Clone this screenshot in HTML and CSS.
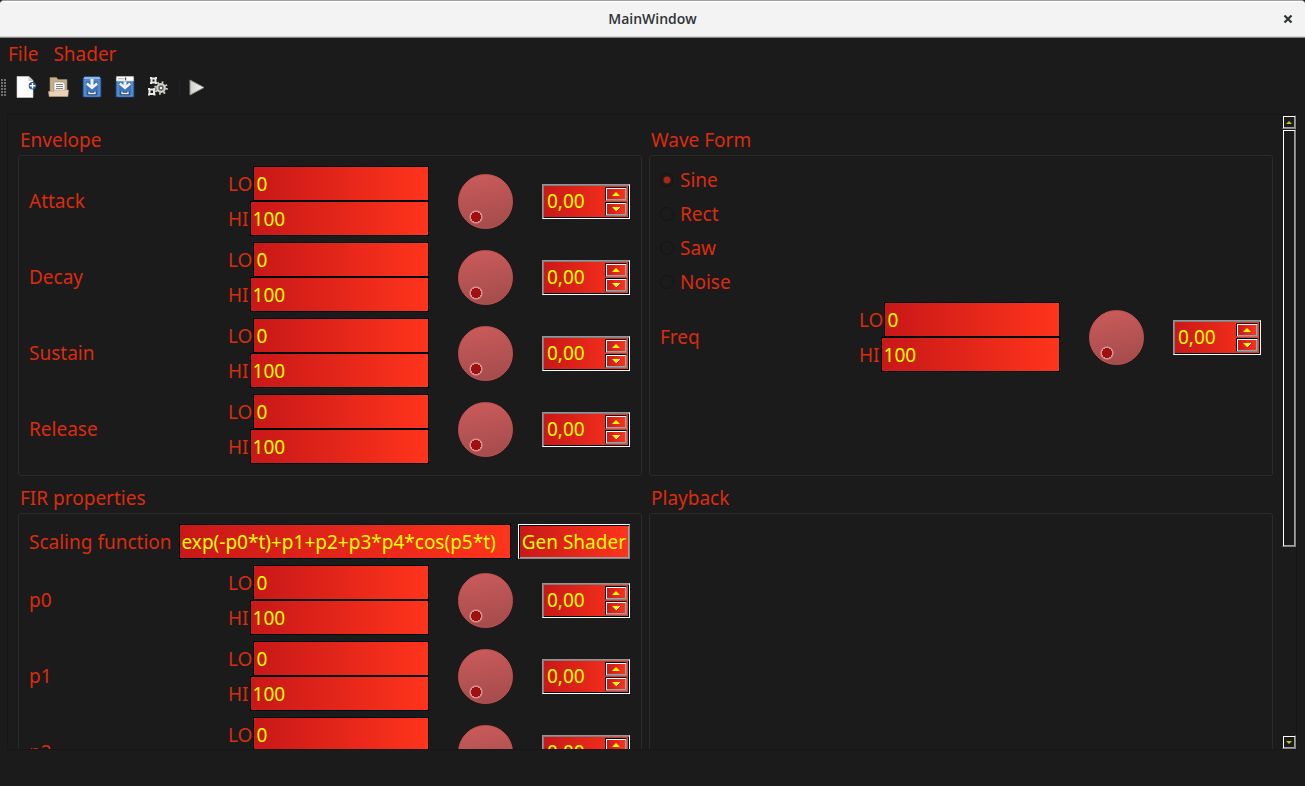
FILE: index.html
```
<!DOCTYPE html>
<html lang="en">
<head>
<meta charset="utf-8">
<title>MainWindow</title>
<link rel="stylesheet" href="styles.css">
</head>
<body>
<div class="window">
  <header class="titlebar">
    <h1 class="titlebar-text">MainWindow</h1>
    <button class="close" aria-label="Close"><svg width="10" height="10" viewBox="0 0 10 10"><path d="M1.500 1.500l7 7M8.500 1.500l-7 7" stroke="#2e3436" stroke-width="2.200"/></svg></button>
  </header>
  <nav class="menubar">
    <button class="menu">File</button>
    <button class="menu">Shader</button>
  </nav>
  <div class="toolbar" role="toolbar" aria-label="Main toolbar">
    <span class="grip"></span>
    <button class="tool" aria-label="New"><svg viewBox="0 0 24 24"><path d="M3 1.500h12l4 4V22.500H3z" fill="#fdfdfd" stroke="#d8d8d8" stroke-width=".6"/><path d="M14.500 1.500v4.500H19z" fill="#c9ccc8"/><circle cx="18.500" cy="10.800" r="3.800" fill="#1f569c"/><path d="M18.500 8v5.600M15.700 10.800h5.600" stroke="#fff" stroke-width="1.500"/></svg></button>
    <button class="tool" aria-label="Open"><svg viewBox="0 0 24 24"><path d="M3 2.500h6.500l1.500 2h9V20H3z" fill="#c6b089" stroke="#9d8862" stroke-width=".6"/><path d="M7 7h9l2 2v8H7z" fill="#f8f8f6" stroke="#8b8b85" stroke-width=".6"/><path d="M9 9.500h7M9 11.500h7M9 13.500h7" stroke="#777" stroke-width=".9"/><path d="M1.500 16.500h5l2-1.500H21.500l-.6 6.500H2.200z" fill="#e9d2b5" stroke="#bca47f" stroke-width=".6"/></svg></button>
    <button class="tool" aria-label="Save"><svg viewBox="0 0 24 24"><path d="M4.500 1.500h15l1.500 2.500v18H3V4z" fill="#3c74bd" stroke="#1d4a8c" stroke-width=".7"/><path d="M4.500 2h15L20.500 4h-17z" fill="#8eb6e6"/><path d="M5 5v16h14V5z" fill="none" stroke="#7ba4dc" stroke-width=".8"/><path d="M12 4v7" stroke="#f4f4f4" stroke-width="3"/><path d="M6.800 8.500L12 13l5.200-4.500" fill="none" stroke="#f4f4f4" stroke-width="2.400"/><path d="M9 16.200v2.600h6v-2.600" fill="none" stroke="#1c3864" stroke-width="3"/><path d="M9 16.500v2h6v-2" fill="none" stroke="#f1f1ec" stroke-width="1.400"/></svg></button>
    <button class="tool" aria-label="Save as"><svg viewBox="0 0 24 24"><path d="M3 3h18v19H3z" fill="#3c74bd" stroke="#1d4a8c" stroke-width=".7"/><path d="M5 6v15h14V6z" fill="none" stroke="#7ba4dc" stroke-width=".8"/><path d="M3.500 1.500h17v4.500h-17z" fill="#fff" stroke="#ccc" stroke-width=".6"/><path d="M5 3.800h6.500" stroke="#aaa"/><path d="M12.700 2.500v2.800" stroke="#222"/><path d="M12 6.500v5" stroke="#f4f4f4" stroke-width="3"/><path d="M6.800 8.500L12 13l5.200-4.500" fill="none" stroke="#f4f4f4" stroke-width="2.400"/><path d="M9 16.200v2.600h6v-2.600" fill="none" stroke="#1c3864" stroke-width="3"/><path d="M9 16.500v2h6v-2" fill="none" stroke="#f1f1ec" stroke-width="1.400"/></svg></button>
    <button class="tool" aria-label="Settings"><svg viewBox="0 0 24 24"><g fill="none" stroke="#e8e8e4" stroke-width="2"><path d="M5.500 3.500h4v4h-4z"/><path d="M3.500 14.500h4.500v4.500H3.500z"/></g><g fill="#e8e8e4"><path d="M4 2h2v2H4zM9 2h2v2H9zM4 7h2v2H4zM9 7h2v2H9zM2 13h2v2H2zM7.500 13h2v2h-2zM2 18.500h2v2H2zM7.500 18.500h2v2h-2z"/></g><circle cx="15" cy="13" r="5.700" fill="none" stroke="#cfcfcb" stroke-width="2.200" stroke-dasharray="1.700 2.777"/><circle cx="15" cy="13" r="3.800" fill="#555753" stroke="#cfcfcb" stroke-width="2.200"/><circle cx="15" cy="13" r="1.300" fill="#eee"/></svg></button>
    <span class="tool-separator"></span>
    <button class="tool" aria-label="Run"><svg viewBox="0 0 24 24"><defs><linearGradient id="play" x1="0" x2="1"><stop stop-color="#cfcfcb"/><stop offset="1" stop-color="#fafafa"/></linearGradient></defs><path d="M5 5l14 7.500L5 20z" fill="url(#play)" stroke="#8c8e89" stroke-width="1"/></svg></button>
  </div>

  <main class="scroll-area">
    <div class="viewport">
      <div class="groups">
        <section class="group"><h2 class="group-title">Envelope</h2><div class="frame" id="envelope"></div></section>
        <section class="group"><h2 class="group-title">Wave Form</h2>
          <div class="frame" id="wave">
            <label class="radio"><input type="radio" name="wave" checked>Sine</label>
            <label class="radio"><input type="radio" name="wave">Rect</label>
            <label class="radio"><input type="radio" name="wave">Saw</label>
            <label class="radio"><input type="radio" name="wave">Noise</label>
          </div>
        </section>
        <section class="group"><h2 class="group-title">FIR properties</h2>
          <div class="frame" id="fir">
            <div class="scaling">
              <label for="scaling">Scaling function</label>
              <input class="field" id="scaling" type="text" value="exp(-p0*t)+p1+p2+p3*p4*cos(p5*t)">
              <button class="generate">Gen Shader</button>
            </div>
          </div>
        </section>
        <section class="group"><h2 class="group-title">Playback</h2><div class="frame"></div></section>
      </div>
    </div>
    <div class="scrollbar">
      <button class="scroll-button" aria-label="Scroll up"><svg width="6" height="3" viewBox="0 0 6 3"><path d="M0 3L3 0l3 3z" fill="#c8c800"/></svg></button>
      <div class="track"><div class="thumb"></div></div>
      <button class="scroll-button" aria-label="Scroll down"><svg width="6" height="3" viewBox="0 0 6 3"><path d="M0 0h6L3 3z" fill="#c8c800"/></svg></button>
    </div>
  </main>
  <footer class="statusbar"></footer>
</div>

<template id="parameter">
  <div class="parameter">
    <span class="parameter-name"></span>
    <div class="limits">
      <label class="limit">LO<input class="field" type="text" value="0"></label>
      <label class="limit">HI<input class="field" type="text" value="100"></label>
    </div>
    <input class="dial" type="range" min="0" max="100" value="0">
    <div class="spin">
      <input class="spin-value" type="text" inputmode="decimal" value="0,00">
      <div class="spin-buttons">
        <button class="spin-button" aria-label="Increase"><svg width="8" height="4" viewBox="0 0 8 4"><path d="M0 4l4-4 4 4z" fill="#ff0"/></svg></button>
        <button class="spin-button" aria-label="Decrease"><svg width="8" height="4" viewBox="0 0 8 4"><path d="M0 0h8L4 4z" fill="#ff0"/><path d="M8 0L4 4" stroke="#fff"/></svg></button>
      </div>
    </div>
  </div>
</template>
<script src="app.js"></script>
</body>
</html>
```
FILE: styles.css
```
* { box-sizing: border-box; }
body {
  margin: 0;
  background: #1b1b1b;
  color: #dc2c10;
  font: 19px/28px "Noto Sans", sans-serif;
}
button, input { font: inherit; color: inherit; margin: 0; padding: 0; border: 0; background: none; border-radius: 0; }
svg { display: block; }

.window { display: flex; flex-direction: column; height: 100vh; }

.titlebar {
  display: grid;
  grid-template-columns: 34px 1fr 34px;
  align-items: center;
  height: 38px;
  flex: none;
  background: #f3f3f3;
  border-top: 1px solid #a39fa0;
  border-bottom: 1px solid #858585;
  border-radius: 4px 4px 0 0;
  box-shadow: inset 0 1px #fff, inset 0 -1px #d4d4d4;
}
.titlebar-text {
  grid-column: 2;
  margin: 0;
  text-align: center;
  color: #2e3436;
  font: 600 14px/20px "Open Sans", sans-serif;
}
.close { display: grid; place-items: center; height: 34px; }

.menubar { display: flex; gap: 15px; padding: 2px 8px 0; flex: none; }
.menu { height: 28px; }

.toolbar { display: flex; align-items: center; height: 38px; padding-left: 1px; flex: none; }
.grip {
  width: 6px;
  height: 18px;
  margin-right: 7px;
  background: repeating-linear-gradient(#1b1b1b 0 1px, transparent 1px 3px), repeating-linear-gradient(90deg, #707070 0 2px, #1b1b1b 2px 3px);
}
.tool { width: 24px; height: 24px; margin-right: 9px; }
.tool svg { width: 24px; height: 24px; }
.tool-separator { width: 1px; height: 18px; margin-right: 5px; background: #202020; }

.scroll-area {
  display: flex;
  flex: 1;
  min-height: 0;
  margin: 8px 8px 0 7px;
  border: 1px solid #161616;
}
.viewport { flex: 1; overflow: hidden; }
.groups { display: grid; grid-template-columns: 1fr 1fr; gap: 8px 7px; padding: 11px 9px 11px 10px; }
.group { display: flex; flex-direction: column; min-width: 0; }
.group-title { margin: 0; padding: 0 2px 1px; font-size: 19px; font-weight: 400; line-height: 28px; }
.frame {
  display: flex;
  flex-direction: column;
  flex: 1;
  gap: 6px;
  padding: 10px 11px 11px 10px;
  border: 1px solid #2b2b2b;
  border-radius: 3px;
}

.parameter { display: grid; grid-template-columns: minmax(0, 1fr) 201px 55px 88px; column-gap: 29px; align-items: center; }
.limits { display: grid; grid-template-columns: minmax(0, 1fr); }
.limit { display: flex; align-items: center; gap: 1px; }
.field {
  flex: 1;
  min-width: 0;
  height: 35px;
  padding: 0 2px;
  border: 1px solid #000;
  background: linear-gradient(90deg, #c81818, #ff341c);
  color: #ff0;
}

.dial {
  appearance: none;
  width: 55px;
  height: 55px;
  border: 1px solid #c85050;
  border-radius: 50%;
  background:
    radial-gradient(circle at 17px 42px, #a01010 0 5px, #d89090 5px 6px, transparent 7px),
    linear-gradient(170deg, #cb5b5b, #a24b4b);
}
.dial::-webkit-slider-thumb { appearance: none; width: 1px; height: 1px; }

.spin {
  display: flex;
  height: 35px;
  padding: 1px 2px 2px 3px;
  border: 1px solid;
  border-color: #959595 #fff #fff #959595;
  background: linear-gradient(90deg, #c81818, #ff341c);
  box-shadow: inset 1px 1px #808080, inset -1px -1px #000;
}
.spin-value { flex: 1; min-width: 0; padding-left: 1px; color: #ff0; }
.spin-buttons { display: grid; gap: 1px; width: 22px; padding-top: 1px; align-content: start; }
.spin-button {
  display: grid;
  place-items: center;
  height: 14px;
  border: 1px solid;
  border-color: #000 #858585 #858585 #000;
  background: linear-gradient(90deg, #c81818, #ff341c);
  box-shadow: inset 1px 1px #fff, inset -1px -1px #a0a0a0;
}

.scaling { display: flex; align-items: center; gap: 7px; }
.generate {
  height: 35px;
  padding: 0 3px;
  border: 1px solid;
  border-color: #fff #858585 #858585 #fff;
  background: linear-gradient(90deg, #c81818, #ff341c);
  box-shadow: inset 1px 1px #000, inset -1px -1px #a0a0a0;
  color: #ff0;
}

.radio { display: flex; align-items: center; gap: 6px; }
.radio input {
  appearance: none;
  width: 14px;
  height: 14px;
  border: 1px solid #141414;
  border-radius: 50%;
}
.radio input:checked { background: radial-gradient(circle, #a82812 0 3px, transparent 4px); }

.scrollbar { display: flex; flex-direction: column; width: 14px; }
.scroll-button, .thumb {
  border: 1px solid;
  border-color: #1b1b1b #858585 #858585 #1b1b1b;
  box-shadow: inset 1px 1px #fff, inset -1px -1px #a0a0a0;
}
.scroll-button { display: grid; place-items: center; height: 14px; flex: none; }
.track { flex: 1; }
.thumb { height: 69%; }

.statusbar { height: 36px; flex: none; }
```
FILE: app.js
```
const template = document.getElementById("parameter");
const parameters = {
  envelope: ["Attack", "Decay", "Sustain", "Release"],
  wave: ["Freq"],
  fir: ["p0", "p1", "p2", "p3", "p4", "p5"],
};

for (const [group, names] of Object.entries(parameters)) {
  for (const name of names) {
    const row = template.content.cloneNode(true);
    row.querySelector(".parameter-name").textContent = name;
    row.querySelector(".dial").setAttribute("aria-label", name + " dial");
    row.querySelector(".spin-value").setAttribute("aria-label", name + " value");
    document.getElementById(group).append(row);
  }
}
```
